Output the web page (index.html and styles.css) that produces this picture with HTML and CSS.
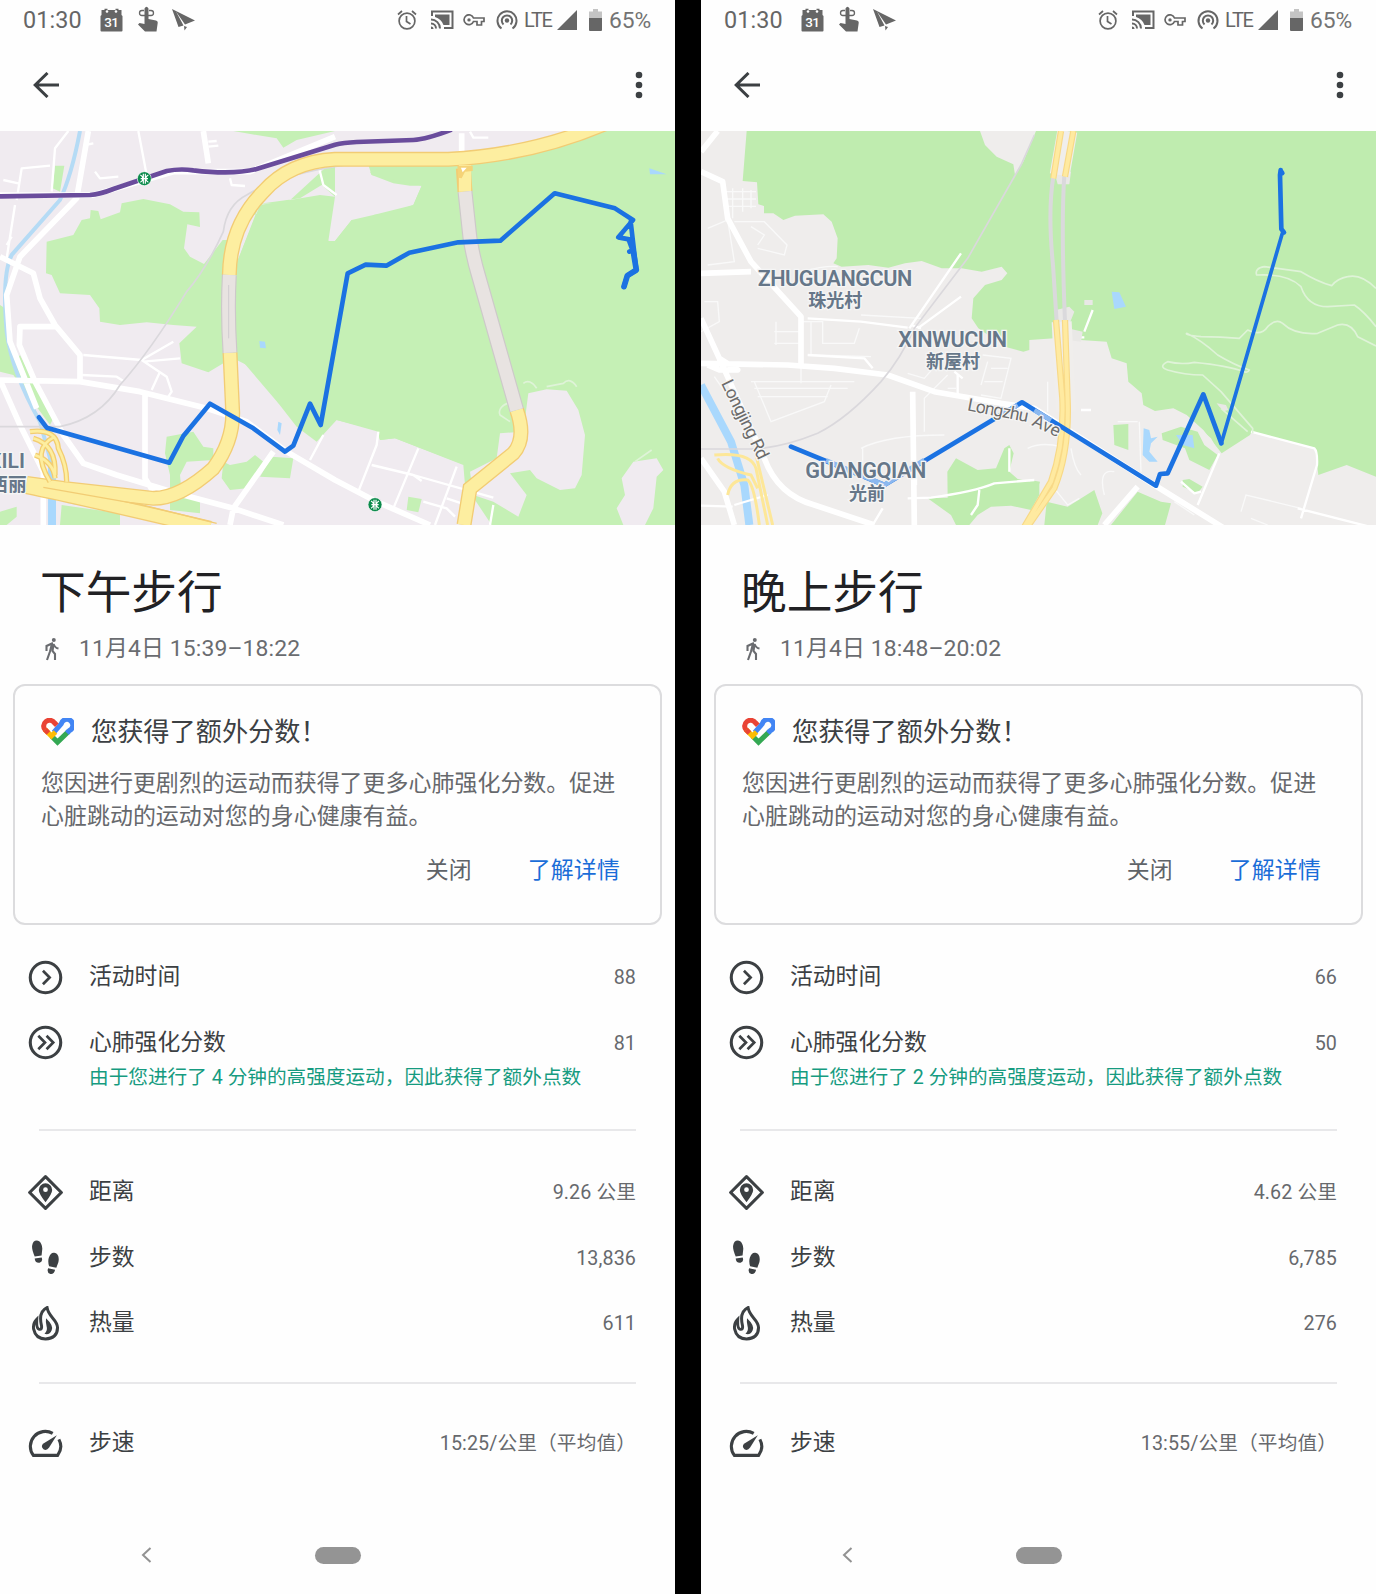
FILE: index.html
```html
<!DOCTYPE html>
<html lang="zh-CN">
<head>
<meta charset="utf-8">
<title>步行</title>
<link rel="stylesheet" href="styles.css">
</head>
<body>
<svg class="sprite" aria-hidden="true">
  <symbol id="calendar" viewBox="0 0 23 24"><path d="M1.500 2h3V.8h3V2h8V.8h3V2h3v5l1 1v14.500q0 1-1 1h-20q-1 0-1-1V8l1-1z"/><circle cx="7" cy="3.500" r="1.300" fill="#fff"/><circle cx="16" cy="3.500" r="1.300" fill="#fff"/><text x="11.300" y="18.800" font-size="13.500" font-weight="500" letter-spacing="-.6" text-anchor="middle" fill="#fff">31</text></symbol>
  <symbol id="touch" viewBox="0 0 22 26"><path d="M7.500 2.500q2-3.500 4 0v10.500l7.500 1.500q2 .7 1.700 2.500l-1.200 8.500H8L1 18.500l1.500-1.500 5 1z"/><path d="M7 4.500H5a2.300 2.300 0 0 0 0 5h9a2.300 2.300 0 0 0 0-5h-2" fill="none" stroke="currentColor" stroke-width="1.300"/></symbol>
  <symbol id="send" viewBox="0 0 23 22"><path d="M0 0l23 11.500-10 4L4 2.500l7.500 14L6.500 18zM12 17l3 1-2.500 3.500z"/></symbol>
  <symbol id="alarm" viewBox="0 0 20 20"><g fill="none" stroke="currentColor" stroke-width="1.700"><circle cx="10" cy="11" r="7.900"/><path d="M9.500 6v5.500l4 2.500M1 4.500L5 1M19 4.500L15 1"/></g></symbol>
  <symbol id="cast" viewBox="0 0 24 20"><g fill="none" stroke="currentColor" stroke-width="2"><path d="M2 6V1.500h20.500V18H14M1 9.500a9 9 0 0 1 9 9M1 13.500a5 5 0 0 1 5 5"/></g><path d="M5 4.500h14.500v10.500h-6A13 13 0 0 0 5 7zM1 16.500a2.500 2.500 0 0 1 2.500 2.500H1z"/></symbol>
  <symbol id="key" viewBox="0 0 22 12"><path d="M10.500 4H21v3.500h-2.500V11H14V7.500h-3.500A4.900 4.900 0 1 1 10.500 4z" fill="none" stroke="currentColor" stroke-width="1.700"/><circle cx="6" cy="5.900" r="1.700"/></symbol>
  <symbol id="hotspot" viewBox="0 0 22 20"><g fill="none" stroke="currentColor" stroke-width="2"><path d="M5.500 18.500a9.500 9.500 0 1 1 11 0M7.500 14.500a5.200 5.200 0 1 1 7 0"/></g><circle cx="11" cy="10.500" r="2.200"/></symbol>
  <symbol id="signal" viewBox="0 0 20 20"><path d="M20 0v20H0z"/></symbol>
  <symbol id="battery" viewBox="0 0 13 22"><path d="M4 0h5v2.500h4V9H0V2.500h4z" opacity=".38"/><path d="M0 9h13v12q0 1-1 1H1q-1 0-1-1z"/></symbol>
  <symbol id="back" viewBox="0 0 26 26"><path d="M26 13H2M14.500 1L2.200 13l12.300 12" fill="none" stroke="currentColor" stroke-width="3"/></symbol>
  <symbol id="more" viewBox="0 0 8 28"><circle cx="4" cy="4" r="3.300"/><circle cx="4" cy="14" r="3.300"/><circle cx="4" cy="24" r="3.300"/></symbol>
  <symbol id="walk" viewBox="0 0 14 23"><circle cx="8.800" cy="2" r="2"/><path d="M8 5L1.500 8v5M7 5.500l-2 8L2 22M8.500 6l-1 7 2.500 3v6M8.500 6q1.500 4 5 4.500" fill="none" stroke="currentColor" stroke-width="2.100"/></symbol>
  <symbol id="heart" viewBox="0 0 98 82"><g fill="none" stroke-width="15"><path d="M31 53L49 71L82 39" stroke="#34a853"/><path d="M38 42L60 17A17.500 17.500 0 1 1 84 37L77 44" stroke="#4285f4"/><path d="M13 36A17.500 17.500 0 1 1 40 14L47 21" stroke="#e94335"/><path d="M12 34L31 53L43 41" stroke="#fbbc04"/><path d="M12 34L22 44" stroke="#e94335"/></g></symbol>
  <symbol id="moves" viewBox="0 0 34 34"><circle cx="17" cy="17" r="14.800" fill="none" stroke="currentColor" stroke-width="3"/><path d="M14.500 10.500L21 17l-6.500 6.500" fill="none" stroke="currentColor" stroke-width="2.600"/></symbol>
  <symbol id="points" viewBox="0 0 34 34"><circle cx="17" cy="17" r="14.800" fill="none" stroke="currentColor" stroke-width="3"/><path d="M10 10.500l6.500 6.500-6.500 6.500M18 10.500l6.500 6.500-6.500 6.500" fill="none" stroke="currentColor" stroke-width="2.600"/></symbol>
  <symbol id="distance" viewBox="0 0 34 34"><path d="M17 1.600L32.400 17 17 32.400 1.600 17z" fill="none" stroke="currentColor" stroke-width="3" stroke-linejoin="round"/><path fill-rule="evenodd" d="M17 26.500Q10.500 18 10.500 14.500a6.500 6.500 0 0 1 13 0Q23.500 18 17 26.500zM17 12a2.300 2.300 0 1 0 0 4.600 2.300 2.300 0 0 0 0-4.600z"/></symbol>
  <symbol id="steps" viewBox="0 0 34 34"><path d="M8.500.5c4 0 5.800 5.500 5.300 9L13.200 15l-6.700 1Q3.500 9 4 5.500 4.700.5 8.500.5zM6.500 18l6.800-1q1.500 4-2 5-4.500.5-4.800-4zM25.500 12.500c4 .5 5 5 4 9L27.500 27l-7-1.500q-1.500-5-.2-8.500 1.700-5 5.200-4.500zM19.500 27.500l6.800 1.500q-1 4.500-4.500 4-3.800-1-2.300-5.500z"/></symbol>
  <symbol id="calories" viewBox="0 0 34 34"><path d="M18.500 1.500C11 5 11.500 12 13 18.500q1 5-2.500 4Q8 21.500 8.500 13 4.500 17 5.500 22.500 7.500 32 17 32q11.500-.5 11.700-11C28.500 13 20 11 18.500 1.500z" fill="none" stroke="currentColor" stroke-width="2.900"/><path d="M17.500 12q7.500 7 5.500 11.500-2 5-7 3.500 3.500-3 2-7.500-1-4-.5-7.500z"/></symbol>
  <symbol id="pace" viewBox="0 0 34 34"><path d="M24 7.200A14.500 14.500 0 0 0 5.200 28.500H28.800A14.500 14.500 0 0 0 30 13" fill="none" stroke="currentColor" stroke-width="3"/><path d="M28 9L20.500 21q-2.500 3.500-5.500 1.500-3-3 0-5.500z"/></symbol>
  <symbol id="nav-back" viewBox="0 0 11 16"><path d="M9.500 1L2 8l7.500 7" fill="none" stroke="currentColor" stroke-width="2"/></symbol>
  <symbol id="metro" viewBox="-22 -22 44 44"><circle r="21" fill="#0b8a4b" stroke="#fff" stroke-width="2"/><path d="M-3-15V15M3-15V15M-12-11Q-5-8-4 0Q-5 8-12 11M12-11Q5-8 4 0Q5 8 12 11M-11 0H11" fill="none" stroke="#fff" stroke-width="3.500"/></symbol>
</svg>

<main class="screens">
<section class="phone">
  <header class="status">
    <span class="clock">01:30</span>
    <svg class="s-cal"><use href="#calendar"/></svg><svg class="s-touch"><use href="#touch"/></svg><svg class="s-send"><use href="#send"/></svg>
    <div class="status-right">
      <svg class="s-alarm"><use href="#alarm"/></svg><svg class="s-cast"><use href="#cast"/></svg><svg class="s-key"><use href="#key"/></svg><svg class="s-hot"><use href="#hotspot"/></svg><span class="lte">LTE</span><svg class="s-signal"><use href="#signal"/></svg><svg class="s-batt"><use href="#battery"/></svg><span class="percent">65%</span>
    </div>
  </header>
  <nav class="appbar"><svg class="back"><use href="#back"/></svg><svg class="more"><use href="#more"/></svg></nav>

  <svg class="map map-day" viewBox="0 18 2025 1182" preserveAspectRatio="none">
    <rect y="18" width="2025" height="1182" fill="#f0ebf0"/>
    <g class="park">
      <path d="M140 350L220 330L245 285L270 280L272 255L295 258L302 283L360 262L365 235L430 222L510 238L550 260L598 262L600 306L562 298L552 370L570 395L612 417L668 345L690 345L790 235L900 220L965 180L1005 215L1005 120H1105L1115 150L1180 175L1230 182H1265L1240 240L1180 262L1120 270L1115 285L1075 300L1055 285L1005 348L985 348L960 240L780 235L700 440V700L780 740L835 835L940 850L890 905L950 950L1010 885L1135 920L1140 945L1185 940L1395 1020L1410 1080L1440 1125L1485 1130L1475 1200H2025V18H1815L1640 75L1340 120H1130L985 120L860 235L735 280L700 440L670 715L625 742L545 715L538 655L590 605L520 600L440 592L360 600L300 590L298 550L270 510L180 505L155 450L138 445z"/>
      <path d="M1110 140L1800 18H2025V1200H1475L1395 1080L1390 1020L1185 940L1140 945L1130 915L1010 885L890 905L835 835L720 700L700 440L780 240L960 210L1005 215L985 348H1005L1055 285L1120 270L1240 240L1265 182L1115 150z"/>
      <path d="M700 18H1005L890 45L850 68L830 40L770 30zM165 122H193L180 200L158 190zM500 935L580 920L610 965L640 970L640 1005L560 1010L540 1050L545 1105L600 1125V1165L510 1155V1050L495 985zM670 1010L690 1020L740 1010L765 990L790 1010L765 1060L740 1090L690 1095L665 1060zM815 995L880 1000L870 1060L780 1055zM185 1140L360 1165V1200H180zM0 1160L50 1145V1175L20 1200H0zM15 550L40 720L60 690L90 750L160 880L150 900L40 750L0 740V540z"/>
      <path d="M1225 1115L1265 1122L1255 1162L1220 1155z"/>
    </g>
    <path class="land-lilac" d="M1585 805L1640 793L1700 797L1735 855L1755 930L1745 1050L1725 1090L1680 1095L1610 1060L1590 1035L1530 1045L1580 1110L1555 1175L1480 1130L1420 1110L1410 1040L1490 1000L1500 925L1570 920zM1900 1010L1970 1000L1990 1035L1970 1055L1960 1150L1935 1200H1870L1850 1150L1875 1110L1865 1060z"/>
    <g class="canal"><path d="M240 18Q215 150 180 225L35 390Q5 450 20 620Q35 740 120 890L150 1000V1200"/></g>
    <path d="M145 1010H168V1200H145zM180 1130L400 1170L340 1155z" class="water"/>
    <g class="pond"><path d="M778 648L795 650L798 670L780 668zM835 890L845 895L840 930L832 915zM1948 130L2000 148L1950 148z"/></g>
    <g class="street thick"><path d="M0 765L240 770L420 800L620 850L740 890L860 980L1005 1065L1130 1130L1290 1200M0 395L100 445L120 520L165 600L240 690V765M165 605H60L58 660L105 770L190 930L250 1015L350 1050L530 1105L700 1150L850 1200M0 765L60 900L130 1040V1200M435 810V1060L460 1100M820 980L700 1150L690 1200M265 18L230 220L60 395L20 510L30 650L110 850M0 210H280L520 140H750L1005 35M610 18L625 115M1385 25V110"/></g>
    <g class="street"><path d="M205 18L165 70L155 200M415 18L440 150M280 55L255 60M625 50L650 48M625 65L655 62M10 165L55 175M35 335L20 360M45 240L20 400M50 225L65 130L150 122M285 140L300 160L355 155M250 690L425 705L500 755L515 800L505 815M425 705L520 650M430 710L540 700M480 740L455 795M245 750L350 755L370 768M955 120L970 180L1010 210M690 160L695 180L735 183M1135 920L1130 960L1075 1100M1255 970L1180 1150M1115 1020L1240 1050L1480 1118M1370 1025L1305 1200M1240 1050L1265 1068M1340 1120L1385 1135M1270 1130L1340 1150L1365 1175M970 930L930 1005M1480 1140L1470 1200M1410 20L1420 38H1465"/></g>
    <g class="trail"><path d="M1570 775Q1590 760 1610 790M1640 785L1690 775Q1710 755 1730 785M1530 890L1500 870Q1490 845 1535 830M1905 1010L1955 975"/></g>
    <path class="rail" d="M1640 70L1300 100Q900 110 740 210Q680 240 670 320Q620 430 560 500Q450 680 360 780Q300 880 180 905H0"/>
    <g class="hw-edge"><path d="M1825 -8Q1600 90 1345 103L1005 103Q870 110 790 200Q690 300 688 450M690 683L698 860Q700 950 640 1030Q540 1120 460 1120L190 1090L80 1075M80 1085Q250 1120 630 1210M1390 130L1395 200M1550 855Q1580 940 1540 985L1410 1090L1392 1200" stroke-width="45"/></g>
    <g class="hw"><path d="M1825 -8Q1600 90 1345 103L1005 103Q870 110 790 200Q690 300 688 450M690 683L698 860Q700 950 640 1030Q540 1120 460 1120L190 1090L80 1075M80 1085Q250 1120 630 1210M1395 120L1395 200M1550 855Q1580 940 1540 985L1410 1090L1392 1200" stroke-width="37"/></g>
    <path class="lane" d="M130 1087Q250 1108 420 1138L650 1195"/>
    <g class="tunnel-edge"><path d="M688 450Q682 560 690 683M1395 200L1410 340Q1420 400 1435 450L1550 855"/></g>
    <g class="tunnel"><path d="M688 450Q682 560 690 683M1395 200L1410 340Q1420 400 1435 450L1550 855"/></g>
    <path d="M686 480V640" stroke="#d0ccd0" stroke-width="3"/>
    <g class="ramp-edge"><path d="M90 920Q170 910 175 970Q200 1020 200 1070M100 940Q170 960 165 1050M165 935Q90 970 150 1070M105 990Q160 1010 165 1060"/></g>
    <g class="ramp"><path d="M90 920Q170 910 175 970Q200 1020 200 1070M100 940Q170 960 165 1050M165 935Q90 970 150 1070M105 990Q160 1010 165 1060"/></g>
    <path d="M1372 122H1418V138L1395 140L1385 160L1375 158z" class="junction"/><path d="M1383 128H1400L1388 142z" class="junction-gap"/>
    <path class="metro-line" d="M0 214L270 210Q300 208 340 192L500 138Q540 130 580 136Q700 150 770 132L1005 59Q1030 53 1070 51L1240 45Q1280 43 1355 14"/>
    <use href="#metro" x="411" y="139" width="44" height="44"/><use href="#metro" x="1103" y="1117" width="44" height="44"/>
    <path class="route" d="M117 877L140 908L508 1013L550 933L630 836L760 910L855 980L880 962L930 836L962 900L1043 445L1097 419L1159 422L1228 383L1375 352L1501 347L1664 205L1845 250L1899 285L1855 337L1888 343M1888 380L1892 378M1892 290L1909 435L1882 452L1872 485"/>
    <path class="route tail" d="M1888 345L1899 375L1909 435L1882 452L1872 485"/>
    <text class="map-label" x="75" y="1028" text-anchor="end" font-size="63">XILI</text>
    <text class="map-label" x="80" y="1098" text-anchor="end" font-size="56">西丽</text>
  </svg>

  <div class="heading">
    <h1>下午步行</h1>
    <p class="when"><svg><use href="#walk"/></svg>11月4日 15:39–18:22</p>
  </div>
  <article class="card">
    <h2><svg><use href="#heart"/></svg>您获得了额外分数！</h2>
    <p>您因进行更剧烈的运动而获得了更多心肺强化分数。促进心脏跳动的运动对您的身心健康有益。</p>
    <div class="actions"><span>关闭</span><span class="learn">了解详情</span></div>
  </article>
  <section class="group first">
    <div class="row"><svg><use href="#moves"/></svg><span>活动时间</span><b>88</b></div>
    <div class="row"><svg><use href="#points"/></svg><span>心肺强化分数</span><b>81</b></div>
    <p class="bonus">由于您进行了 4 分钟的高强度运动，因此获得了额外点数</p>
  </section>
  <section class="group second">
    <div class="row"><svg><use href="#distance"/></svg><span>距离</span><b>9.26 公里</b></div>
    <div class="row"><svg><use href="#steps"/></svg><span>步数</span><b>13,836</b></div>
    <div class="row"><svg><use href="#calories"/></svg><span>热量</span><b>611</b></div>
  </section>
  <section class="group third">
    <div class="row"><svg><use href="#pace"/></svg><span>步速</span><b>15:25/公里（平均值）</b></div>
  </section>
  <footer class="navbar"><svg><use href="#nav-back"/></svg><i></i></footer>
</section>

<section class="phone">
  <header class="status">
    <span class="clock">01:30</span>
    <svg class="s-cal"><use href="#calendar"/></svg><svg class="s-touch"><use href="#touch"/></svg><svg class="s-send"><use href="#send"/></svg>
    <div class="status-right">
      <svg class="s-alarm"><use href="#alarm"/></svg><svg class="s-cast"><use href="#cast"/></svg><svg class="s-key"><use href="#key"/></svg><svg class="s-hot"><use href="#hotspot"/></svg><span class="lte">LTE</span><svg class="s-signal"><use href="#signal"/></svg><svg class="s-batt"><use href="#battery"/></svg><span class="percent">65%</span>
    </div>
  </header>
  <nav class="appbar"><svg class="back"><use href="#back"/></svg><svg class="more"><use href="#more"/></svg></nav>

  <svg class="map map-night" viewBox="0 18 2025 1182" preserveAspectRatio="none">
    <rect y="18" width="2025" height="1182" fill="#efedec"/>
    <g class="park">
      <path d="M137 18L125 168L168 172L172 238L189 243V265L217 265L247 285L282 272L367 268L392 290L410 340L407 400L397 415L422 425L502 420L562 428L612 415L662 408L722 430L782 430L842 440L902 425L919 445L902 465L852 480L817 520L812 580L832 610L912 665L967 680L985 675V645L1060 640L1217 650L1232 700L1277 715L1282 770L1322 805L1327 840L1362 858L1417 850L1457 870L1507 915L1562 985L1647 930L1652 920L1842 970L1852 1050L1937 1020L2025 1055V18z"/>
      <path d="M739 1040L765 1000L830 1035L885 1030L910 970L925 960L938 985L925 1040L950 1062L1015 1075V1110L990 1155L930 1142L870 1145L830 1170L805 1200H765L750 1170L680 1120L740 1118zM1237 900L1282 897V975L1240 960zM987 1065L1017 1070L1010 1100L987 1120zM1037 1130L1100 1145L1180 1095L1204 1165L1190 1200H1030zM1310 1100L1380 1130L1410 1135L1392 1200H1230zM1445 1065L1465 1062L1505 1085L1490 1105L1445 1085z"/>
    </g>
    <path class="land-grey" d="M837 18L852 60L887 95L937 118L942 150L967 110L1005 18zM1380 860L1420 852L1465 885L1530 940L1555 985L1530 1035L1470 1000L1460 965L1380 940L1400 920L1440 905z"/>
    <g class="park"><path d="M1382 925L1440 905L1490 920L1510 960L1550 990L1525 1035L1465 1005L1452 970L1385 945z"/></g>
    <g class="pond"><path d="M1232 500L1255 502L1275 545L1240 552zM1328 910L1345 915L1350 940L1370 935L1350 955L1345 980L1370 1010L1345 1010L1325 990zM1425 930L1475 930L1480 970L1445 960z"/></g>
    <path d="M0 780L90 950L130 1080L145 1200" stroke="#a9d8fd" stroke-width="24"/>
    <g class="block"><path d="M75 200H165M75 222H165M75 244H165M95 190V280M125 190V260M150 195V250M20 310L80 285L100 410L20 420M170 360L190 330L150 305M170 370L250 390L258 360L190 290L100 290M10 530H50L55 590L0 620M220 620H300M220 655H300M300 590H365V655H460L475 610M225 590V660M330 590V690L510 695M300 700V775M150 770H460M160 790H440M170 815H380M160 770L210 890L370 830L390 780M40 755L190 970M480 970Q560 930 730 930M485 970V1020M740 750L670 820V920M765 790H740M620 745L670 760L740 680M845 690L930 700L900 820L840 810M860 710L840 780M870 730H920M850 770H905M480 570L660 580M300 440Q380 420 410 425M980 970Q1020 950 1080 965M1040 770V860M1110 970Q1120 1030 1140 1050M1210 1110Q1190 1030 1240 1040M1060 1090L1100 1140L1135 1120M1315 890L1320 1040M1250 890H1310M1620 1160L1635 1110L1800 1150M1650 1180L1700 1200M1420 1130L1480 1170"/></g>
    <g class="street"><path d="M320 580L480 590L620 608M320 690L490 700L515 730M625 610L780 385M650 610L780 515M630 600L660 610M645 1080V1020M620 1120L690 1118Q820 1100 880 1075L1000 1065M835 1095L830 1140L810 1170M770 750V810M760 740L785 760M925 970V1040M100 1140L200 1110M0 1142L95 1145M545 1150L515 1200M1650 920L1840 970Q1850 980 1848 1020L1800 1180M1555 985L1490 1140M1790 1150L2025 1210M1140 855H1170M1070 637H1150M1150 620L1175 555M1440 1070L1480 1105L1500 1100M1000 860L1060 900"/></g>
    <g class="street thick"><path d="M0 715L260 720L400 730L560 750L700 800L900 835L1000 850L1360 1080L1570 1210M0 140L65 170L80 280L150 410L300 575V720M0 445L150 440M0 580L55 700L190 1000Q230 1110 340 1140L520 1200M635 800L640 1200M0 1000L70 1100L100 1200M0 80L50 18M1310 1085L1210 1200M55 700L110 735L55 735L20 720"/></g>
    <path class="rail" d="M1000 30L960 120L800 400L640 610Q600 700 540 770Q440 880 350 925Q240 970 150 972H0"/>
    <g class="trail"><path d="M2025 490Q1980 445 1940 455Q1910 460 1892 482Q1850 470 1800 440L1690 425Q1660 430 1667 450Q1760 445 1800 485Q1820 545 1880 545L1960 540Q1990 560 2025 605M2025 663L1970 635Q1950 590 1910 600L1850 625Q1780 630 1745 595Q1725 580 1700 605Q1680 635 1640 615L1615 640Q1560 635 1500 635Q1450 630 1457 625Q1500 645 1550 690Q1600 720 1645 735Q1640 745 1630 740Q1580 722 1480 712Q1440 720 1400 710Q1370 725 1400 735Q1450 750 1505 750L1560 800L1655 910V925M1560 850L1640 920"/></g>
    <path d="M1547 835L1575 840L1582 855L1570 858L1555 845zM1150 525H1175V540H1150zM1065 555L1105 545L1120 560L1100 610L1145 620L1140 650L1060 640zM1060 140H1110L1105 178H1070z" class="clearing"/>
    <path d="M1099 18L1076 150M1082 590L1095 860" stroke="#f0eeec" stroke-width="60"/>
    <g class="thin-tunnel"><path d="M1057 155Q1040 260 1056 420L1067 590M1090 150Q1080 300 1092 590"/></g>
    <g class="casing"><path d="M1080 18L1057 160M1117 18L1092 155M1065 585L1084 820Q1090 960 1050 1070L970 1205M1092 585L1100 830Q1105 980 1060 1090L980 1205"/></g>
    <g class="hw-thin"><path d="M1080 18L1057 160M1117 18L1092 155M1065 585L1084 820Q1090 960 1050 1070L970 1205M1092 585L1100 830Q1105 980 1060 1090L980 1205"/></g>
    <g class="hw-fine"><path d="M40 990Q150 980 165 1030L200 1200M50 1000Q65 1030 150 1050L170 1090M165 990L215 1200M80 1110Q90 1060 140 1065Q160 1080 175 1200"/></g>
    <path class="route" d="M270 965L550 1080L963 832L1365 1082L1377 1047L1400 1045L1507 808L1561 955"/>
    <path class="route slim" d="M1561 955L1744 325"/>
    <path class="route" d="M1739 135L1737 150L1741 312L1749 322M1739 137L1744 144"/>
    <path class="faded" d="M375 1006L550 1080L670 1005M880 882L950 840M1000 856L1050 886"/>
    <g class="map-label">
      <text x="170" y="484" font-size="65" textLength="464">ZHUGUANGCUN</text><text x="322" y="546" font-size="54">珠光村</text>
      <text x="592" y="665" font-size="65" textLength="326">XINWUCUN</text><text x="675" y="730" font-size="54">新屋村</text>
      <text x="313" y="1060" font-size="65" textLength="363">GUANGQIAN</text><text x="444" y="1124" font-size="54">光前</text>
    </g>
    <text class="road-name" transform="translate(60 775) rotate(64)" font-size="53" textLength="258">Longjing Rd</text>
    <text class="road-name" transform="translate(797 856) rotate(11)" font-size="53" textLength="185">Longzhu</text>
    <text class="road-name" transform="translate(990 900) rotate(25)" font-size="53">Ave</text>
  </svg>

  <div class="heading">
    <h1>晚上步行</h1>
    <p class="when"><svg><use href="#walk"/></svg>11月4日 18:48–20:02</p>
  </div>
  <article class="card">
    <h2><svg><use href="#heart"/></svg>您获得了额外分数！</h2>
    <p>您因进行更剧烈的运动而获得了更多心肺强化分数。促进心脏跳动的运动对您的身心健康有益。</p>
    <div class="actions"><span>关闭</span><span class="learn">了解详情</span></div>
  </article>
  <section class="group first">
    <div class="row"><svg><use href="#moves"/></svg><span>活动时间</span><b>66</b></div>
    <div class="row"><svg><use href="#points"/></svg><span>心肺强化分数</span><b>50</b></div>
    <p class="bonus">由于您进行了 2 分钟的高强度运动，因此获得了额外点数</p>
  </section>
  <section class="group second">
    <div class="row"><svg><use href="#distance"/></svg><span>距离</span><b>4.62 公里</b></div>
    <div class="row"><svg><use href="#steps"/></svg><span>步数</span><b>6,785</b></div>
    <div class="row"><svg><use href="#calories"/></svg><span>热量</span><b>276</b></div>
  </section>
  <section class="group third">
    <div class="row"><svg><use href="#pace"/></svg><span>步速</span><b>13:55/公里（平均值）</b></div>
  </section>
  <footer class="navbar"><svg><use href="#nav-back"/></svg><i></i></footer>
</section>
</main>
</body>
</html>
```

FILE: styles.css
```css
* { box-sizing: border-box; margin: 0; padding: 0; }
body { background: #000; color: #3c4043; font-family: Roboto, "Noto Sans CJK SC", sans-serif; }
svg { display: block; fill: currentColor; flex: none; }
.sprite { width: 0; height: 0; position: absolute; }
.screens { display: grid; grid-template-columns: 675px 675px; gap: 26px; width: 1376px; height: 1594px; }
.phone { background: #fefefe; height: 1594px; overflow: hidden; display: flex; flex-direction: column; }

/* system status bar */
.status { height: 40px; display: flex; align-items: center; padding-left: 23px; color: #666; flex: none; }
.clock { font-size: 23.4px; letter-spacing: .1px; width: 77px; }
.s-cal { width: 23px; height: 24px; margin-top: -1px; }
.s-touch { width: 22px; height: 26px; margin-left: 14px; margin-top: -2px; }
.s-send { width: 23px; height: 22px; margin-left: 13px; margin-top: -1px; }
.status-right { margin-left: auto; width: 278px; display: flex; align-items: center; height: 40px; }
.s-alarm { width: 20px; height: 20px; }
.s-cast { width: 24px; height: 20px; margin-left: 13px; margin-top: -1px; }
.s-key { width: 22px; height: 12px; margin-left: 9px; }
.s-hot { width: 22px; height: 20px; margin-left: 11px; }
.lte { font-size: 20px; margin-left: 6px; width: 33px; letter-spacing: -1.2px; }
.s-signal { width: 20px; height: 20px; }
.s-batt { width: 13px; height: 22px; margin-left: 12px; }
.percent { font-size: 22.8px; margin-left: 7px; color: #737373; white-space: nowrap; }

.appbar { height: 91px; display: flex; align-items: flex-start; justify-content: space-between; padding: 31px 32px 0 33px; flex: none; }
.back { width: 26px; height: 26px; margin-top: 1px; }
.more { width: 8px; height: 28px; }

/* maps */
.map { width: 675px; height: 394px; flex: none; }
.map path { fill: none; }
.map .park path { fill: #c5f0b5; }
.map-night .park path { fill: #bfecaf; }
.map .land-lilac { fill: #f0ebf0; }
.map .land-grey { fill: #efedec; }
.map .pond path, .map .water { fill: #a9d8fd; }
.map .junction { fill: #f5d377; }
.map .junction-gap { fill: #fff; }
.map .clearing { fill: #e9e8e6; }
.canal path { stroke: #b5dbf5; stroke-width: 12; }
.street path { stroke: #fff; stroke-width: 7; stroke-linejoin: round; }
.street.thick path { stroke-width: 17; }
.block path { stroke: #f9f9f9; stroke-width: 4; }
.trail path { stroke: #dff3d8; stroke-width: 5; stroke-linejoin: round; }
.rail { stroke: #dad8dc; stroke-width: 5; }
.hw-edge path { stroke: #f2cc74; }
.hw path { stroke: #fdeea0; }
.lane { stroke: #f2cc74; stroke-width: 4; }
.tunnel-edge path { stroke: #cdc9c9; stroke-width: 45; }
.tunnel path { stroke: #e8e3e1; stroke-width: 38; }
.ramp-edge path { stroke: #f3cd70; stroke-width: 16; }
.ramp path { stroke: #fdeea0; stroke-width: 8; }
.metro-line { stroke: #6a4c9c; stroke-width: 14; }
.thin-tunnel path { stroke: #dad9dc; stroke-width: 12; }
.casing path { stroke: #f8d987; stroke-width: 19; }
.hw-thin path { stroke: #ffeaa0; stroke-width: 12; }
.hw-fine path { stroke: #fde798; stroke-width: 9; }
.route { stroke: #1b72e2; stroke-width: 14; stroke-linecap: round; stroke-linejoin: round; }
.route.tail { stroke-width: 17; }
.route.slim { stroke-width: 11; }
.faded { stroke: #8bb8ef; stroke-width: 14; stroke-linejoin: round; }
.map-label { fill: #667789; font-weight: 600; stroke: #f5f5f5; stroke-width: 8; paint-order: stroke; }
.road-name { fill: #6c6c6c; stroke: #f5f5f5; stroke-width: 7; paint-order: stroke; }

.heading { height: 159px; padding: 36px 0 0 40px; flex: none; }
h1 { font-weight: 400; font-size: 45.7px; line-height: 66px; color: #212124; }
.when { display: flex; align-items: center; height: 30px; line-height: 30px; margin-top: 7px; font-size: 22.9px; letter-spacing: .12px; color: #6a6c70; }
.when svg { width: 14px; height: 23px; margin: 0 20px 0 5px; }

.card { width: 649px; height: 241px; margin-left: 13px; border: 2px solid #dcdcde; border-radius: 12px; padding: 27px 0 0 26px; flex: none; }
h2 { display: flex; align-items: center; height: 38px; line-height: 38px; font-weight: 400; font-size: 26.2px; color: #3c4043; }
h2 svg { width: 33px; height: 28px; margin-right: 17px; }
.card p { width: 582px; margin-top: 16px; font-size: 22.98px; line-height: 33px; color: #66686c; }
.actions { display: flex; justify-content: flex-end; gap: 56px; height: 34px; line-height: 34px; margin: 21px 40px 0 0; font-size: 22.9px; color: #5f6368; }
.learn { color: #1a6dd8; letter-spacing: .2px; }

.group { margin-left: 28px; width: 608px; display: flex; flex-direction: column; gap: 25.7px; flex: none; position: relative; }
.first { height: 204px; padding-top: 32.300px; }
.row { display: grid; grid-template-columns: 34px 1fr auto; column-gap: 27px; align-items: center; height: 40px; font-size: 22.8px; color: #3c4043; flex: none; }
.row svg { width: 35px; height: 35px; }
.row span { line-height: 30px; }
.row b { font-weight: 400; font-size: 19.7px; line-height: 24px; padding-top: 2px; color: #67696d; letter-spacing: .1px; }
.bonus { margin: -24px 0 0 61px; font-size: 19.65px; line-height: 26px; white-space: nowrap; color: #169b80; }
.second { height: 253px; padding-top: 43px; }
.third { height: 150px; padding-top: 41px; }
.second::before, .third::before { content: ""; position: absolute; left: 11px; right: 0; top: 0; height: 2px; background: #e8e8ea; }

.navbar { margin: auto 0 17px; height: 46px; display: flex; align-items: center; padding-left: 141px; color: #929292; flex: none; }
.navbar svg { width: 11px; height: 16px; }
.navbar i { width: 46px; height: 17px; border-radius: 9px; background: #949494; margin-left: 163px; }
```
